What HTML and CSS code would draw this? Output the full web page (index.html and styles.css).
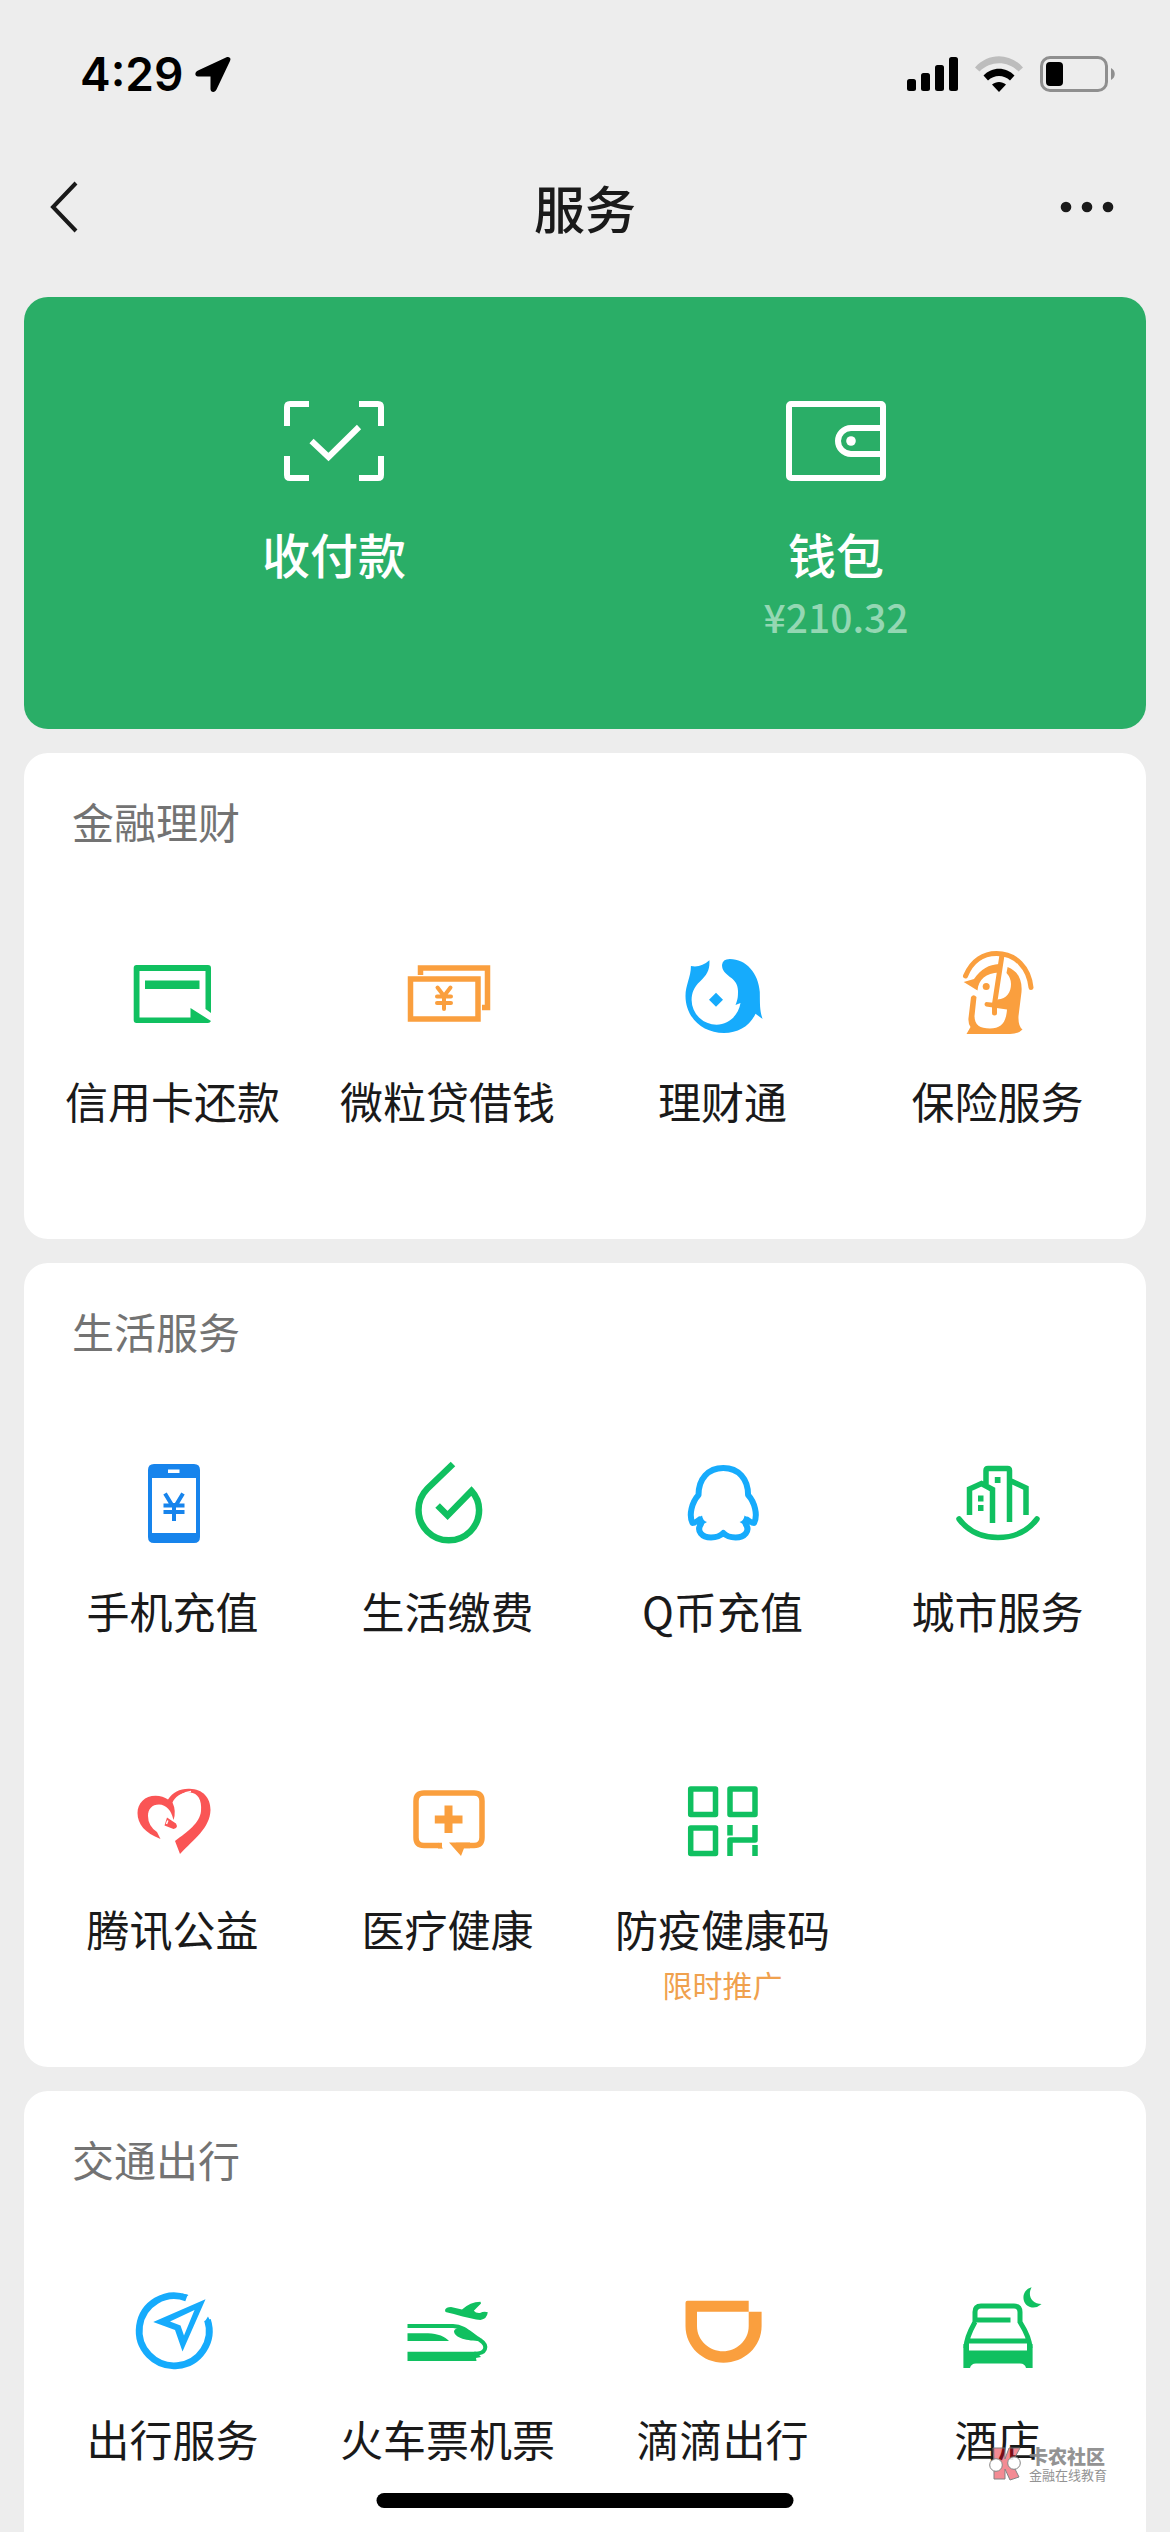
FILE: index.html
```html
<!DOCTYPE html>
<html lang="zh-CN">
<head>
<meta charset="utf-8">
<meta name="viewport" content="width=device-width, initial-scale=1">
<title>服务</title>
<link rel="stylesheet" href="styles.css">
</head>
<body>
<div class="status-bar">
  <div class="status-left">
    <span class="clock">4:29</span>
    <svg class="location" viewBox="0 0 36 36" aria-hidden="true"><path d="M31 1.500 3 14.500C-.5 16-.5 20.500 3 20.500H15.500V33C15.500 36.500 20 37 21.500 33.500L35 5C36.500 2 34 0 31 1.500Z"/></svg>
  </div>
  <div class="status-right">
    <svg class="signal" viewBox="0 0 51 34" aria-hidden="true"><rect y="22" width="9" height="12" rx="2.500"/><rect x="14" y="16" width="9" height="18" rx="2.500"/><rect x="28" y="8" width="9" height="26" rx="2.500"/><rect x="42" width="9" height="34" rx="2.500"/></svg>
    <svg class="wifi" viewBox="0 0 48 36" aria-hidden="true"><path d="M0 11.500C13-3.500 35-3.500 48 11.500L43.500 15.500C32.500 4.500 15.500 4.500 4.500 15.500Z" fill="#bdbdbd"/><path d="M8.500 19.500C17 10.500 31 10.500 39.500 19.500L35 24.500C29 18.500 19 18.500 13 24.500Z"/><path d="M17 28.500C21 25 27 25 31 28.500L24 36Z"/></svg>
    <svg class="battery" viewBox="0 0 76 36" aria-hidden="true"><rect x="1.500" y="1.500" width="65" height="33" rx="8.500" fill="none" stroke="#8f8f8f" stroke-width="3"/><path d="M71 12C76 14.500 76 21.500 71 24Z" fill="#8f8f8f"/><rect x="6" y="6" width="17" height="24" rx="4"/></svg>
  </div>
</div>
<header class="nav-bar">
  <button class="nav-button" type="button" aria-label="返回"><svg class="back" viewBox="0 0 28 52" aria-hidden="true"><path d="M26 2 3 26 26 50" fill="none" stroke="#1a1a1a" stroke-width="4"/></svg></button>
  <h1 class="nav-title">服务</h1>
  <button class="nav-button nav-more" type="button" aria-label="更多"><svg class="more" viewBox="0 0 54 12" aria-hidden="true"><circle cx="6" cy="6" r="5.300"/><circle cx="27" cy="6" r="5.300"/><circle cx="48" cy="6" r="5.300"/></svg></button>
</header>
<main class="content">
  <section class="pay-card">
    <a class="pay-item" href="#pay">
      <svg class="pay-icon" viewBox="0 0 100 80" aria-hidden="true"><path d="M25 3H6Q3 3 3 6V25M75 3H94Q97 3 97 6V25M25 77H6Q3 77 3 74V55M75 77H94Q97 77 97 74V55M27.500 40 44.500 56 75 26"/></svg>
      <span class="pay-label">收付款</span>
    </a>
    <a class="pay-item" href="#wallet">
      <svg class="pay-icon" viewBox="0 0 100 80" aria-hidden="true"><rect x="3" y="3" width="94" height="74" rx="2"/><path d="M97 27H65A13 13 0 0 0 65 53H97"/><circle cx="65" cy="40" r="4.800" fill="#fff" stroke="none"/></svg>
      <span class="pay-label">钱包</span>
      <span class="pay-amount">¥210.32</span>
    </a>
  </section>

  <section class="card">
    <h2 class="card-title">金融理财</h2>
    <div class="grid">
      <a class="item" href="#credit">
        <svg class="icon green" viewBox="0 0 96 96" aria-hidden="true"><path class="fill" d="M11.500 19H83Q86 19 86 22V67L80.500 63V25H14.500V71.500H65.500V62L86 75Q85 77 83 77H11.500Q8.700 77 8.700 74V22Q8.700 19 11.500 19ZM20 34.500H74.500V43H20Z"/></svg>
        <span class="label">信用卡还款</span>
      </a>
      <a class="item" href="#loan">
        <svg class="icon orange" viewBox="0 0 96 96" aria-hidden="true"><g class="line" stroke-width="5.500"><path d="M10.500 33H78V73H10.500Z"/><path d="M20.500 29V22H87.500V61.500H82"/><path stroke-width="4" stroke-linecap="round" d="M37.500 41.500 44 50 50.500 41.500M44 50V63M37 50.500H51M37 57H51"/></g></svg>
        <span class="label">微粒贷借钱</span>
      </a>
      <a class="item" href="#wealth">
        <svg class="icon sky" viewBox="0 0 96 96" aria-hidden="true"><path class="fill" d="M15.900 20Q26 22 34.400 14.300C35 24 32 29 25 35.500C19 41 16.600 47 16.600 54A25 25 0 0 0 41.600 78.700C54 78.700 63.500 69 65.500 57L60.500 59C63 53 63 50 63 45C63 30 47 31 47 19Q47.500 13 54.800 13C71 13 83.500 27 84.800 46C85 58 84.500 64 87.600 73L80.500 67.700C75 80 63 87 49 87C27 87 10.500 71 10.500 50C10.500 39 16 31 15.900 20Z"/><path class="fill" d="m41 46.700 7 7-7 7-7-7Z"/></svg>
        <span class="label">理财通</span>
      </a>
      <a class="item" href="#insurance">
        <svg class="icon orange" viewBox="0 0 96 96" aria-hidden="true"><path class="line" stroke-width="5" stroke-linecap="round" d="M15.500 30C22 14 34 7.500 46.500 7.500C66 7.500 79 22 81 41.500M52 9 44.500 58V67"/><path class="fill" d="M13.700 36 24 33C31 23 39 18.500 49 18V26.500C36 27 28.500 33 27.500 44.500ZM57.600 21C68 25 72.500 34 71.500 46L68.500 70Q68 80 72.500 83.500Q69 87.500 60 88H16.500L20.500 81Q18 77 18.500 72L21 51Q23.500 47.500 26.500 51L24.500 70C24.500 79 30 82.500 40 82.500C51 82.500 56 77 57 63.500L36 60.500Q33 58 36 56L46 57L47.500 53.500C57 53 61 46 61 38Q61 32 56.500 27Z"/><circle class="fill" cx="36.200" cy="40.500" r="3.500"/></svg>
        <span class="label">保险服务</span>
      </a>
    </div>
  </section>

  <section class="card">
    <h2 class="card-title">生活服务</h2>
    <div class="grid">
      <a class="item" href="#topup">
        <svg class="icon blue" viewBox="0 0 96 96" aria-hidden="true"><path class="fill" fill-rule="evenodd" d="M29 8H69Q75 8 75 14V81Q75 87 69 87H29Q23 87 23 81V14Q23 8 29 8ZM27 22V77H71V22ZM43 13.500V17H54.500V13.500Z"/><path class="line" stroke-width="4" d="M40 37.500 47 49H51L58 37.500M49 49V65M38.500 49.500H59.500M38.500 56H59.500"/></svg>
        <span class="label">手机充值</span>
      </a>
      <a class="item" href="#bills">
        <svg class="icon green" viewBox="0 0 96 96" aria-hidden="true"><path class="line" stroke-width="6.500" d="M53 8 27.500 32.500C21 39 18.500 45 18.500 54A30.300 30.300 0 0 0 79.100 54Q79 43 71.500 35L47.600 59.500 37.600 49.500"/></svg>
        <span class="label">生活缴费</span>
      </a>
      <a class="item" href="#qcoin">
        <svg class="icon sky" viewBox="0 0 96 96" aria-hidden="true"><path class="line" stroke-width="6" stroke-linejoin="round" d="M48.300 12C33 12 23.500 23 23.500 39C17 46 13.500 59 17.500 67Q20 67 24.500 63.500L26 68C21 75 27 81.500 36 81.500Q44 81.500 48.300 77Q52.600 81.500 60.600 81.500C69.600 81.500 75.600 75 70.600 68L72.100 63.500Q76.600 67 79.100 67C83.100 59 79.600 46 73.100 39C73.100 23 63.600 12 48.300 12Z"/><path class="fill" d="M27 59.500Q28 65 32 66L24 71 20 65ZM69.600 59.500Q68.600 65 64.600 66L72.600 71 76.600 65Z"/></svg>
        <span class="label">Q币充值</span>
      </a>
      <a class="item" href="#city">
        <svg class="icon green" viewBox="0 0 96 96" aria-hidden="true"><g class="line" stroke-width="5.500"><path stroke-linecap="round" d="M9 63C18 75 31 81.500 48 81.500C65 81.500 78 75 87 63"/><path d="M19.500 59V33L31.500 27.500 42.500 33.500V67M36 30V14.500Q36 12.500 38 12.500H57.500Q59.500 12.500 59.500 14.500V66M60 24.500 76 32V59"/></g><path class="fill" d="M44.800 21H50.500V27H44.800ZM28 39.500H33.500V45.500H28ZM28 49H33.500V55H28Z"/></svg>
        <span class="label">城市服务</span>
      </a>
      <a class="item" href="#charity">
        <svg class="icon red" viewBox="0 0 96 96" aria-hidden="true"><path class="fill" d="M35.500 65C20 59 12.500 50 12.500 39C12.500 29 20 21.700 30.500 21.700Q38 21.700 43 25.500C48 18 55 14.500 64.500 14.800C78 15 85.500 24 85.500 36C85 54 69 65 55 80L50 67C62 58 75 49 76 37C77 26 73 19 65 18.500C56 18 50 23 47.500 28.500Q51.500 37 48.500 46Q45 31 34 30.500C27 30.500 23 35 23 42Q23 52 32 58ZM42 43.500 51 49.500Q53.500 54 48.500 55L39.500 51.500Z"/><path d="M48.500 29Q55 19 66 17.500M42.800 46.500 41.500 50" fill="none" stroke="#fff" stroke-width="1.500"/></svg>
        <span class="label">腾讯公益</span>
      </a>
      <a class="item" href="#medical">
        <svg class="icon orange" viewBox="0 0 96 96" aria-hidden="true"><path class="line" stroke-width="5.500" d="M42 71.500H24Q16 71.500 16 63.500V27Q16 19 24 19H74Q82 19 82 27V63.500Q82 71.500 74 71.500H56"/><path class="fill" d="M38 68.500 43 74.500H38ZM49 68.500H70V74.300H64L61 82ZM44.500 31.500H52.500V41.500H62.500V49.500H52.500V59H44.500V49.500H34.800V41.500H44.500Z"/></svg>
        <span class="label">医疗健康</span>
      </a>
      <a class="item" href="#healthcode">
        <svg class="icon green" viewBox="0 0 96 96" aria-hidden="true"><path class="line" stroke-width="5.500" stroke-linejoin="round" d="M15.700 15H40.500V40.500H15.700ZM55 15H80V40.500H55ZM15.700 54H40.500V79.500H15.700ZM55 51V61.500M80 51V66H55V82M80 71V82"/></svg>
        <span class="label">防疫健康码</span>
        <span class="note">限时推广</span>
      </a>
    </div>
  </section>

  <section class="card">
    <h2 class="card-title">交通出行</h2>
    <div class="grid">
      <a class="item" href="#travel">
        <svg class="icon sky" viewBox="0 0 96 96" aria-hidden="true"><path class="line" stroke-width="6.800" d="M61.500 14A35 35 0 1 0 82.500 36"/><path class="fill" d="M57 9.500 63.500 11 58 15.500ZM83 32.500 79.500 38 86 38.500Z"/><path class="fill" fill-rule="evenodd" d="M80.500 15.300 28.200 38 50 46 57.500 67.500ZM69.500 26 45 37.500 55.500 41.500 59 51.500Z"/></svg>
        <span class="label">出行服务</span>
      </a>
      <a class="item" href="#tickets">
        <svg class="icon green" viewBox="0 0 96 96" aria-hidden="true"><path class="fill" d="M45 26Q46 23 51 23L62 25.500Q70 18 80.500 17.700L81 19.500 73.800 26.700Q76 29.500 80 29Q84 27 87.800 28.300Q87 35 80.500 36C69 35 56 30 45.500 28ZM7.500 49.300H28C38 49.300 45 53 49 57H7.500ZM7.500 67.700H76L81 73 76 74 76.500 77H7.500ZM54 47Q55 44 60 43.500C69 44.500 76 51 80 57C68 57 54 54 54 47Z"/><path class="line" stroke-width="4" d="M7.500 42H53C65 42 72 52 80 56C89 62 86 70 74 69.700"/></svg>
        <span class="label">火车票机票</span>
      </a>
      <a class="item" href="#didi">
        <svg class="icon orange" viewBox="0 0 96 96" aria-hidden="true"><path class="fill" fill-rule="evenodd" d="M12.500 16.700H73.700V27.700H86.600V42C86.600 63 69 78.700 48.500 78.700C28 78.700 10.500 63 10.500 42V18.700Q10.500 16.700 12.500 16.700ZM22 27.700V42C22 57 35 67.300 48 67.300C61 67.300 73.700 57 73.700 42V27.700Z"/></svg>
        <span class="label">滴滴出行</span>
      </a>
      <a class="item" href="#hotel">
        <svg class="icon green" viewBox="0 0 96 96" aria-hidden="true"><path class="line" stroke-width="5" d="M25 38V28Q25 22 31 22H64Q70 22 70 28V38Q80 54 80 64M25 38Q16 54 16 64M19 57H77M25 36H60.500"/><path class="fill" d="M13.400 60 19 58V66.500H77V58L82.600 60V84H76Q75 79.500 70 79.500H26Q21 79.500 20 84H13.400ZM81.600 3.300C71 6 71 20 80 23Q86 25 91.600 20C82 20 77 12 81.600 3.300Z"/></svg>
        <span class="label">酒店</span>
      </a>
    </div>
  </section>
</main>
<aside class="watermark">
  <svg class="watermark-logo" viewBox="0 0 34 34" aria-hidden="true"><path d="M5 1H17V12L21 1H32L24 16 31 30 22 33 17 22V32H6V16Z" fill="#e60012" fill-opacity=".5" stroke="#777"/><circle cx="8" cy="18" r="6.300" fill="#fff" stroke="#777"/><circle cx="26" cy="16" r="6.300" fill="#fff" stroke="#777"/></svg>
  <div class="watermark-text"><span class="watermark-name">卡农社区</span><span class="watermark-slogan">金融在线教育</span></div>
</aside>
<div class="home-indicator"></div>
</body>
</html>
```
FILE: styles.css
```css
* {
  box-sizing: border-box;
}

body {
  display: flex;
  flex-direction: column;
  height: 100vh;
  margin: 0;
  overflow: hidden;
  position: relative;
  background: #ededed;
  color: #1a1a1a;
  font-family: "Noto Sans CJK SC", "Noto Sans", sans-serif;
}

a {
  color: inherit;
  text-decoration: none;
}

svg {
  display: block;
}

.status-bar {
  display: flex;
  flex: none;
  justify-content: space-between;
  align-items: center;
  height: 141px;
  padding: 7px 54px 0 80px;
}

.status-left,
.status-right {
  display: flex;
  align-items: center;
}

.status-left {
  gap: 12px;
}

.status-right {
  gap: 17px;
}

.clock {
  color: #000;
  font: 600 46px/60px Inter, sans-serif;
}

.location {
  width: 36px;
  height: 36px;
}

.signal {
  width: 51px;
  height: 34px;
}

.wifi {
  width: 48px;
  height: 36px;
}

.battery {
  width: 76px;
  height: 36px;
}

.nav-bar {
  display: flex;
  flex: none;
  align-items: center;
  justify-content: space-between;
  height: 132px;
  padding: 0 50px;
}

.nav-button {
  display: flex;
  align-items: center;
  width: 120px;
  height: 100px;
  padding: 0;
  border: 0;
  background: none;
}

.nav-more {
  justify-content: flex-end;
  padding-right: 6px;
}

.back {
  width: 28px;
  height: 52px;
}

.more {
  width: 54px;
  height: 12px;
  fill: #1a1a1a;
}

.nav-title {
  margin: 0;
  font-size: 51px;
  font-weight: 500;
  line-height: 72px;
}

.content {
  display: flex;
  flex: 1;
  flex-direction: column;
  gap: 24px;
  min-height: 0;
  padding: 24px 24px 0;
  overflow-y: auto;
  scrollbar-width: none;
}

.pay-card {
  display: grid;
  flex: none;
  grid-template-columns: repeat(2, 1fr);
  padding: 104px 59px 86px;
  border-radius: 24px;
  background: #2aae67;
  color: #fff;
}

.pay-item {
  display: flex;
  flex-direction: column;
  align-items: center;
  min-height: 242px;
}

.pay-icon {
  width: 100px;
  height: 80px;
  margin-bottom: 38px;
  fill: none;
  stroke: #fff;
  stroke-width: 6px;
}

.pay-label {
  font-size: 48px;
  font-weight: 500;
  line-height: 68px;
}

.pay-amount {
  margin-top: 4px;
  color: #94d7b3;
  font-size: 39px;
  font-weight: 500;
  line-height: 50px;
}

.card {
  flex: none;
  padding-bottom: 26px;
  border-radius: 24px;
  background: #fff;
}

.card-title {
  margin: 0;
  padding: 38px 48px 44px;
  color: #737373;
  font-size: 42px;
  font-weight: 400;
  line-height: 60px;
}

.grid {
  display: grid;
  grid-template-columns: repeat(4, 1fr);
  grid-auto-rows: 318px;
  padding: 0 11px;
}

.item {
  display: flex;
  flex-direction: column;
  align-items: center;
  padding-top: 51px;
  white-space: nowrap;
}

.icon {
  width: 96px;
  height: 96px;
  margin-bottom: 28px;
}

.fill {
  fill: currentColor;
}

.line {
  fill: none;
  stroke: currentColor;
}

.green {
  color: #10c060;
}

.orange {
  color: #fa9f3e;
}

.sky {
  color: #16abfc;
}

.blue {
  color: #1784ec;
}

.red {
  color: #fa5555;
}

.label {
  font-size: 43px;
  line-height: 60px;
}

.note {
  margin-top: 4px;
  color: #f0a14e;
  font-size: 30px;
  line-height: 44px;
}

.watermark {
  display: flex;
  position: absolute;
  right: 63px;
  bottom: 49px;
  align-items: center;
  gap: 7px;
  opacity: .9;
}

.watermark-logo {
  width: 34px;
  height: 34px;
}

.watermark-text {
  display: flex;
  flex-direction: column;
  color: #888;
}

.watermark-name {
  font-size: 19px;
  font-weight: 900;
  line-height: 22px;
}

.watermark-slogan {
  font-size: 13px;
  line-height: 16px;
}

.home-indicator {
  position: absolute;
  bottom: 24px;
  left: 50%;
  width: 417px;
  height: 15px;
  border-radius: 8px;
  background: #000;
  transform: translateX(-50%);
}
```
